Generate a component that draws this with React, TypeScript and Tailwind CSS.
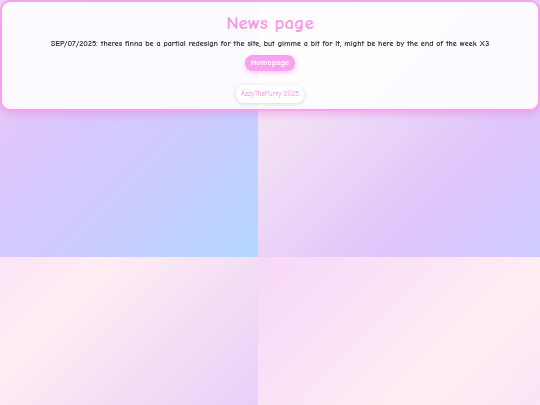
import React from "react";

export default function App() {
  return (
    <div className="relative min-h-[405px] w-full">
      <div className="fixed inset-0 -z-10 grid grid-cols-[258px_1fr] grid-rows-[257px_257px] overflow-hidden">
        <div className="bg-[linear-gradient(135deg,#eddcf8_0%,#dec6fc_30%,#cdcbfe_62%,#b2d8ff_100%)]" />
        <div className="bg-[linear-gradient(135deg,#ffeef4_0%,#efdcf6_35%,#dfc5fc_70%,#d0ccfe_100%)]" />
        <div className="bg-[linear-gradient(135deg,#fbe3f5_0%,#ffedf3_22%,#f1dcf5_55%,#dfc4fc_100%)]" />
        <div className="bg-[linear-gradient(135deg,#f7d8f9_0%,#fbe3f6_30%,#ffedf3_55%,#f3dff7_100%)]" />
      </div>
      <header className="flex h-[111px] flex-col items-center rounded-[10px] border-2 border-[#f7a2ec] bg-white/90 pt-[8px] shadow-[0_3px_8px_rgba(235,120,215,0.45)] font-['Comic_Sans_MS','Comic_Neue','Noto_Sans',sans-serif]">
        <h1 className="text-[19px] font-bold leading-[26px] text-[#f799e8]">News page</h1>
        <p className="mt-[2px] text-[8.1px] font-bold leading-[12px] text-[#2a2a2a]">
          SEP/07/2025: theres finna be a partial redesign for the site, but gimme a bit for it, might be here by the end of the week X3
        </p>
        <button className="mt-[5px] h-[16px] rounded-full bg-[#f9a0ee] px-[6px] font-['Liberation_Sans',Arial,sans-serif] text-[7.5px] font-bold text-white shadow-[0_2px_4px_rgba(240,130,220,0.4)]">
          Homepage
        </button>
        <div className="mt-[14px] flex h-[18px] items-center rounded-[8px] bg-white px-[5px] text-[7px] text-[#f08ce0] shadow-[0_1px_4px_rgba(0,0,0,0.15)]">
          AzzyTheFurry 2025
        </div>
      </header>
    </div>
  );
}
